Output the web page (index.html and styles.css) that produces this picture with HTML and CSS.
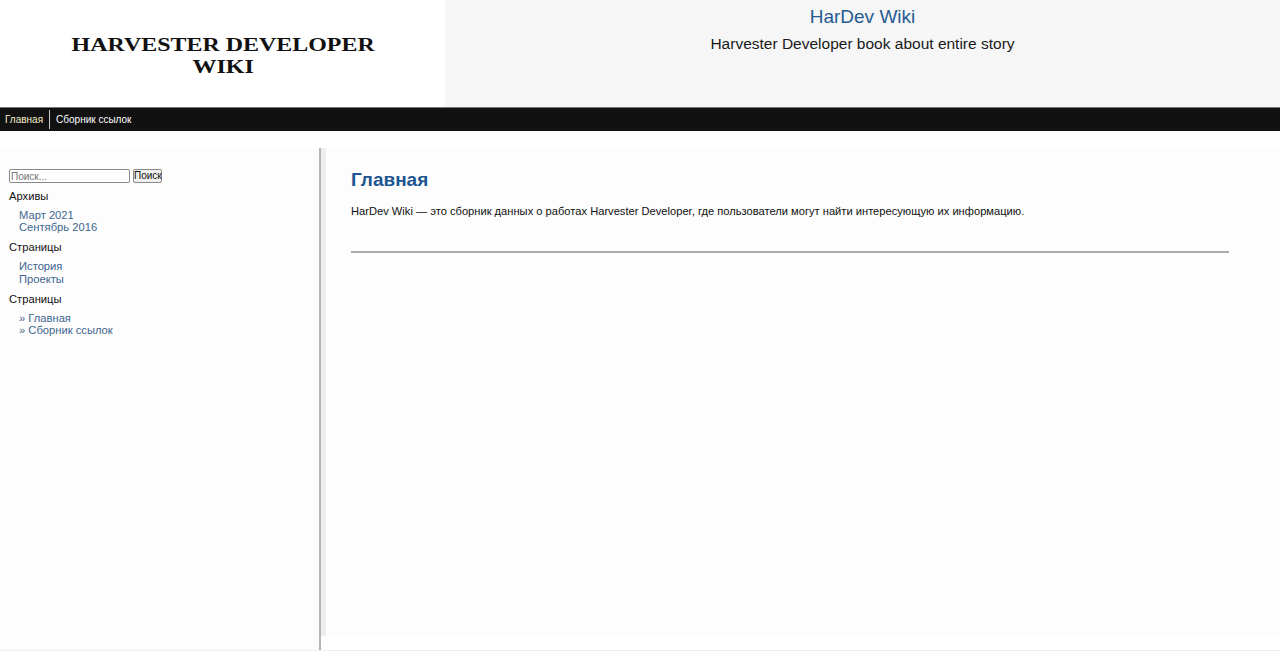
FILE: index.html
```html
<!DOCTYPE html>
<html lang="ru">
  <head>
    <meta charset="UTF-8" />
    <meta name="viewport" content="width=device-width, initial-scale=1.0" />
    <title>HarDev Wiki</title>
    <link rel="stylesheet" href="styles.css">
  </head>
  <body>
    <header class="top">
      <div class="logo">
        <div class="logo-text">
          <span>HARVESTER DEVELOPER</span>
          <span>WIKI</span>
        </div>
      </div>
      <div class="site-info">
        <a class="site-name" href="#">HarDev Wiki</a>
        <p class="site-desc">Harvester Developer book about entire story</p>
      </div>
    </header>

    <nav class="menu">
      <a class="menu-item current" href="#">Главная</a>
      <a class="menu-item" href="#">Сборник ссылок</a>
    </nav>

    <div class="wrap">
      <aside class="sidebar">
        <form class="search">
          <input class="search-input" type="text" placeholder="Поиск..." />
          <button class="search-btn" type="button">Поиск</button>
        </form>

        <h3 class="widget-title">Архивы</h3>
        <ul class="widget-list">
          <li><a href="#">Март 2021</a></li>
          <li><a href="#">Сентябрь 2016</a></li>
        </ul>

        <h3 class="widget-title">Страницы</h3>
        <ul class="widget-list">
          <li><a href="#">История</a></li>
          <li><a href="#">Проекты</a></li>
        </ul>

        <h3 class="widget-title">Страницы</h3>
        <ul class="widget-list">
          <li>» <a href="#">Главная</a></li>
          <li>» <a href="#">Сборник ссылок</a></li>
        </ul>
      </aside>

      <main class="content">
        <div class="post">
          <h1 class="post-title">Главная</h1>
          <p class="post-text">HarDev Wiki — это сборник данных о работах Harvester Developer, где пользователи могут найти интересующую их информацию.</p>
          <hr class="post-line" />
        </div>
      </main>
    </div>
  </body>
</html>
```

FILE: styles.css
```css
body {
  margin: 0;
  padding: 0;
  height: 651px;
  overflow: hidden;
  background-color: white;
  font-family: "Liberation Sans", Arial, sans-serif;
  color: #111;
}
a {
  text-decoration: none;
}

.top {
  display: flex;
  height: 107px;
}
.logo {
  width: 445px;
  display: flex;
  justify-content: center;
  align-items: center;
  background-color: white;
}
.logo-text {
  display: flex;
  flex-direction: column;
  align-items: center;
  padding: 5px 0 0 1px;
  font-family: "Liberation Serif", serif;
  font-size: 18px;
  line-height: 22px;
  font-weight: bold;
  color: #111;
  transform: scaleX(1.33);
}
.site-info {
  flex: 1;
  padding-top: 5px;
  text-align: center;
  background-color: #f6f6f6;
}
.site-name {
  font-size: 19px;
  line-height: 23px;
  color: #265b92;
}
.site-desc {
  margin: 5px 0 0;
  font-size: 15.5px;
  line-height: 22px;
  color: #1a1a1a;
}

.menu {
  display: flex;
  align-items: flex-start;
  height: 24px;
  padding-top: 2px;
  background-color: #111;
  border-top: 1px solid #777;
  box-sizing: border-box;
}
.menu-item {
  padding: 0 6px;
  font-size: 10px;
  line-height: 19px;
  color: white;
}
.menu-item:first-child {
  padding-left: 5px;
}
.menu-item.current {
  color: #f5eecb;
  border-right: 1px solid #ccc;
}

.wrap {
  display: flex;
  height: 503px;
  margin-top: 17px;
  box-sizing: border-box;
  border-bottom: 1px solid #eee;
}
.sidebar {
  width: 321px;
  flex-shrink: 0;
  box-sizing: border-box;
  padding: 21px 9px 0;
  background-color: #fdfdfd;
  border-right: 2px solid #b5b5b5;
}
.search {
  display: flex;
  align-items: center;
  gap: 3px;
  height: 14px;
}
.search-input {
  width: 121px;
  height: 14px;
  box-sizing: border-box;
  padding: 0 1px;
  font-family: inherit;
  font-size: 10px;
  border: 1px solid #8a8a8a;
  border-radius: 2px;
}
.search-btn {
  width: 29px;
  height: 14px;
  box-sizing: border-box;
  padding: 0;
  font-family: inherit;
  font-size: 10px;
  line-height: 10px;
  color: #111;
  background-color: #efefef;
  border: 1px solid #8a8a8a;
  border-radius: 2px;
}
.widget-title {
  margin: 5.5px 0 0;
  font-size: 11.2px;
  line-height: 14px;
  font-weight: normal;
}
.widget-list {
  list-style: none;
  margin: 6px 0 6.5px;
  padding: 0 0 0 10px;
  font-size: 11.2px;
  line-height: 12.5px;
  color: #4c6a8c;
}
.widget-list a {
  color: #40658f;
}

.content {
  flex: 1;
  height: 488px;
  box-sizing: border-box;
  padding: 0 51px 0 25px;
  background-color: #fdfdfd;
  border-left: 5px solid #eee;
}
.post-title {
  margin: 20px 0 0;
  font-size: 19px;
  line-height: 24px;
  font-weight: bold;
  color: #1d5590;
}
.post-text {
  margin: 12px 0 0;
  font-size: 11.15px;
  line-height: 14px;
  color: #111;
}
.post-line {
  margin: 33px 0 0;
  height: 2px;
  border: 0;
  background-color: #ababab;
}
```
